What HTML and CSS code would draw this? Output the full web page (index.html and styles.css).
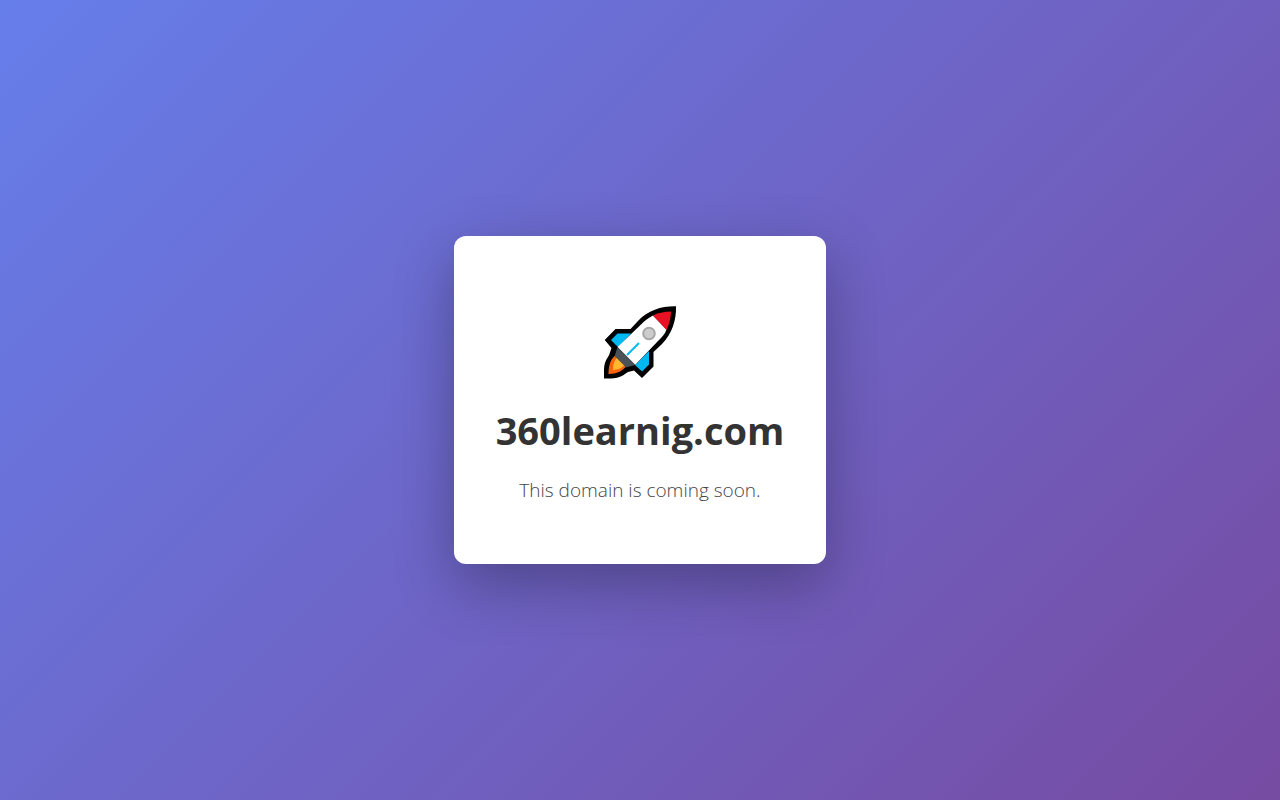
FILE: index.html
```
<!DOCTYPE html>
<html lang="en">
<head>
    <meta charset="UTF-8">
    <meta name="viewport" content="width=device-width, initial-scale=1.0">
    <title>360learnig.com</title>
    <link rel="stylesheet" href="styles.css">
</head>
<body>
<main class="container">
    <svg class="icon" viewBox="-6 -6 92 92" aria-hidden="true">
        <path d="M76 4.300C62 4 48 8 38 19L30.500 27H15.500L4.700 38L11.500 46C10 50 9.500 53 8 55C5 59 4 63 4 68V76.500H11C20 76.500 25 72 28 70L34 68.500L42 76L53.500 64.500V50L62 42C72 32 76.500 18 76 4.300Z"/>
        <path fill="#00b9f1" d="M11 38L17.500 31.500H31L18 45ZM49 49V62.500L42 69.500L35 63Z"/>
        <path fill="#fff" d="M53 13.500L66.500 27.500C65 32 62 35 58 39L35 63L17.500 45L41 22.500C45 18.500 48 16 53 13.500Z"/>
        <path fill="#e81224" d="M53 13.500C59 10.500 65 9.500 71 9.500C71 15 69.500 22 66.500 28Z"/>
        <circle cx="49" cy="31.500" r="5.800" fill="#ccc" stroke="#a6a6a6" stroke-width="2"/>
        <path stroke="#00b9f1" stroke-width="2" d="M39 41L27 53"/>
        <path fill="#4a5157" d="M17.500 45L35.500 63L25.500 65.500L14.500 54.500Z"/>
        <path fill="#f7630c" d="M14.500 54L25.500 65C22 69 17 72 8.500 72C8.500 65 10 58 14.500 54Z"/>
        <path fill="#ffb92e" d="M16.500 56L24 63.500C21 66.500 18 67.500 13 68C13 64 13.500 60 16.500 56Z"/>
    </svg>
    <h1>360learnig.com</h1>
    <p>This domain is coming soon.</p>
</main>
</body>
</html>
```
FILE: styles.css
```
* {
    margin: 0;
    padding: 0;
    box-sizing: border-box;
}

body {
    font-family: "Segoe UI", "Open Sans", "Noto Sans", sans-serif;
    background: linear-gradient(135deg, #667eea 0%, #764ba2 100%);
    min-height: 100vh;
    display: flex;
    align-items: center;
    justify-content: center;
}

.container {
    background: white;
    padding: 60px 42px;
    border-radius: 12px;
    box-shadow: 0 20px 60px rgba(0, 0, 0, 0.3);
    text-align: center;
}

.icon {
    display: block;
    width: 92px;
    margin: 0 auto 16px;
}

h1 {
    color: #333;
    font-size: 38px;
    line-height: 52px;
    margin-bottom: 20px;
}

p {
    color: #444;
    font-size: 19px;
    font-weight: 300;
    line-height: 28px;
}
```
